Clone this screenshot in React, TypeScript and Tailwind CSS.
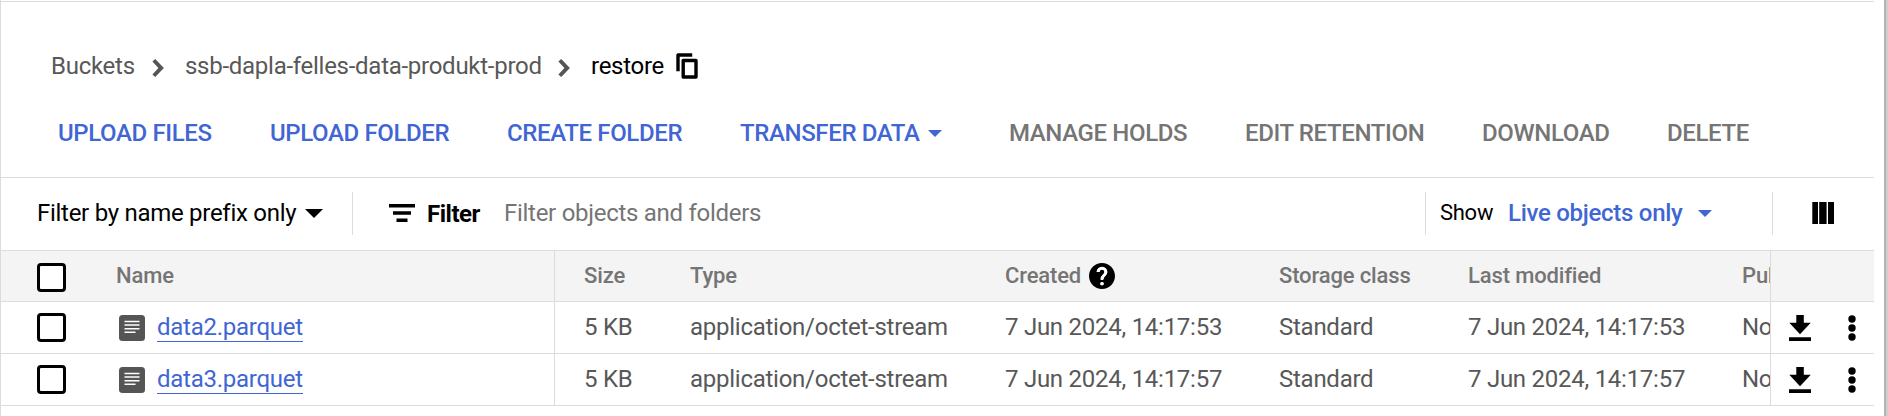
import type { ReactNode } from 'react';

const crumb = 'text-2xl leading-8 whitespace-nowrap';

function Chevron() {
  return (
    <svg width="13" height="18" viewBox="0 0 13 18" fill="#555" className="mt-[3px] shrink-0">
      <path d="M0.400 2.600L3.200 0l8.700 9-8.700 9-2.800-2.600L6.400 9z" />
    </svg>
  );
}

function Caret({ w, h }: { w: number; h: number }) {
  return (
    <svg width={w} height={h} viewBox="0 0 18 9" preserveAspectRatio="none" className="shrink-0" fill="currentColor">
      <path d="M0 0h18l-9 9z" />
    </svg>
  );
}

function Action({ width, off, children }: { width: string; off?: boolean; children: ReactNode }) {
  return (
    <button className={`flex h-[38px] shrink-0 items-center text-left text-2xl leading-8 font-medium tracking-[-0.37px] whitespace-nowrap ${width} ${off ? 'text-[#757575]' : 'text-[#3f66d4]'}`}>
      {children}
    </button>
  );
}

function Box() {
  return <span className="block h-[29px] w-[29px] shrink-0 rounded-[4px] border-3 border-black bg-white" />;
}

function DocIcon() {
  return (
    <svg width="26" height="26" viewBox="0 0 26 26" className="shrink-0">
      <rect width="26" height="26" rx="3.5" fill="#555" />
      <path d="M5.500 6.500h15M5.500 10h15M5.500 13.700h15M5.500 17.300h11" stroke="#fff" strokeWidth="1.5" />
    </svg>
  );
}

function Row({ name, time }: { name: string; time: string }) {
  return (
    <div className="flex h-[52px] w-[1873px] shrink-0 text-2xl leading-[50px] tracking-[-0.26px] text-[#585858]">
      <div className="flex w-[554px] shrink-0 items-start border-r border-b border-[#dcdcdc] pl-9">
        <span className="mt-[11px]"><Box /></span>
        <span className="mt-[13px] ml-[53px] flex"><DocIcon /></span>
        <a className="mt-[10px] ml-3 h-[30px] border-b border-[#3f66d4] leading-[30px] text-[#3f66d4]">{name}</a>
      </div>
      <div className="flex w-[1216px] shrink-0 overflow-hidden border-r border-b border-[#dcdcdc] whitespace-nowrap">
        <span className="w-[135px] shrink-0 pl-[29px]">5 KB</span>
        <span className="w-[315px] shrink-0">application/octet-stream</span>
        <span className="w-[274px] shrink-0">{time}</span>
        <span className="w-[189px] shrink-0">Standard</span>
        <span className="w-[274px] shrink-0">{time}</span>
        <span className="shrink-0">No</span>
      </div>
      <div className="flex flex-1 items-center border-b border-[#dcdcdc] pl-[18px]">
        <svg width="22" height="26" viewBox="0 0 22 26">
          <path d="M7.300 0h7.500v7.700h7L11 19.300 0.300 7.700h7zM0 22.300h22V26H0z" />
        </svg>
        <svg width="8" height="26" viewBox="0 0 8 26" className="ml-[37px]">
          <circle cx="4" cy="4" r="3.700" />
          <circle cx="4" cy="13" r="3.700" />
          <circle cx="4" cy="22" r="3.700" />
        </svg>
      </div>
    </div>
  );
}

export default function App() {
  return (
    <div className="flex h-[416px] w-[1888px] overflow-hidden bg-white font-['Roboto',sans-serif] text-black">
      <main className="flex w-[1874px] shrink-0 flex-col border-l border-[#dcdcdc]">
        <div className="h-[2px] shrink-0 border-b border-[#dcdcdc]" />
        <nav className="flex h-[112px] shrink-0 items-center pt-4 pl-[50px] tracking-[-0.27px] text-[#585858]">
          <span className={`${crumb} w-[101px]`}>Buckets</span>
          <Chevron />
          <span className={`${crumb} ml-[20px] w-[373px]`}>ssb-dapla-felles-data-produkt-prod</span>
          <Chevron />
          <span className={`${crumb} ml-[20px] w-[85px] text-black`}>restore</span>
          <svg width="22" height="26" viewBox="0 0 22 26" fill="none" stroke="#000" strokeWidth="3.400" strokeLinejoin="round">
            <path d="M2 18.300V2H16.200M7.200 7.500h12.800v16.500H7.200z" />
          </svg>
        </nav>
        <div className="flex h-[64px] shrink-0 border-b border-[#dcdcdc] pl-[57px]">
          <Action width="w-[212px]">UPLOAD FILES</Action>
          <Action width="w-[237px]">UPLOAD FOLDER</Action>
          <Action width="w-[233px]">CREATE FOLDER</Action>
          <Action width="w-[269px]"><span className="w-[188px]">TRANSFER DATA</span><Caret w={14} h={7} /></Action>
          <Action off width="w-[236px]">MANAGE HOLDS</Action>
          <Action off width="w-[237px]">EDIT RETENTION</Action>
          <Action off width="w-[185px]">DOWNLOAD</Action>
          <Action off width="w-[90px]">DELETE</Action>
        </div>
        <div className="flex h-[73px] shrink-0 border-b border-[#dcdcdc] pt-[14px] text-2xl tracking-[-0.28px] whitespace-nowrap">
          <div className="flex h-[43px] w-[351px] items-center pb-px pl-9">
            <span className="w-[268px]">Filter by name prefix only</span>
            <Caret w={18} h={9} />
          </div>
          <div className="flex h-[43px] w-[1073px] items-center border-l border-[#dcdcdc] pb-px pl-[36px]">
            <svg width="26" height="18" viewBox="0 0 26 18"><path d="M0 0h26v3.500H0zM4 7.200h18v3.500H4zM7.500 14.400h11v3.500h-11z" /></svg>
            <span className="ml-3 w-[77px] pt-px font-bold tracking-[-0.5px]">Filter</span>
            <span className="text-[#757575]">Filter objects and folders</span>
          </div>
          <div className="flex h-[43px] w-[347px] items-center border-l border-[#dcdcdc] pb-px pl-[14px]">
            <span className="w-[68px] text-[22px] leading-8">Show</span>
            <span className="w-[190px] font-medium text-[#3f66d4]">Live objects only</span>
            <span className="flex text-[#3f66d4]"><Caret w={14} h={7} /></span>
          </div>
          <div className="flex h-[43px] flex-1 items-center border-l border-[#dcdcdc] pb-px pl-[39px]">
            <svg width="22" height="22" viewBox="0 0 22 22"><path d="M0.300 0h5.700v22H0.300zM7.200 0h7.400v22H7.200zM16 0h6v22h-6z" /></svg>
          </div>
        </div>
        <div className="flex h-[51px] shrink-0 border-b border-[#dcdcdc] bg-[#f4f4f4] text-[22px] leading-[49px] font-medium tracking-[-0.14px] whitespace-nowrap text-[#757575]">
          <div className="flex w-[554px] shrink-0 border-r border-[#dcdcdc] pl-9">
            <span className="mt-3"><Box /></span>
            <span className="ml-[50px]">Name</span>
          </div>
          <div className="flex w-[1216px] shrink-0 overflow-hidden border-r border-[#dcdcdc]">
            <span className="w-[135px] shrink-0 pl-[29px]">Size</span>
            <span className="w-[315px] shrink-0">Type</span>
            <span className="flex h-[49px] w-[274px] shrink-0 items-center">
              <span className="w-[84px]">Created</span>
              <svg width="26" height="26" viewBox="2 2 20 20"><path d="M12 2C6.480 2 2 6.480 2 12s4.480 10 10 10 10-4.480 10-10S17.520 2 12 2zm1 17h-2v-2h2v2zm2.070-7.750l-.9.920C13.450 12.900 13 13.500 13 15h-2v-.5c0-1.100.450-2.100 1.170-2.830l1.240-1.260c.370-.360.590-.860.590-1.410 0-1.100-.9-2-2-2s-2 .9-2 2H8c0-2.210 1.790-4 4-4s4 1.790 4 4c0 .880-.360 1.680-.930 2.250z" /><path d="M9 9a3 3 0 0 1 6 0c0 2.300-3 2.700-3 5.500" fill="none" stroke="#fff" strokeWidth="2.300" /><circle cx="12" cy="18" r="1.400" fill="#fff" /></svg>
            </span>
            <span className="w-[189px] shrink-0">Storage class</span>
            <span className="w-[274px] shrink-0">Last modified</span>
            <span className="shrink-0">Public access</span>
          </div>
        </div>
        <Row name="data2.parquet" time="7 Jun 2024, 14:17:53" />
        <Row name="data3.parquet" time="7 Jun 2024, 14:17:57" />
      </main>
      <div className="ml-auto h-full w-1 border-l-2 border-[#b4b4b4] bg-[#cfcfcf]" />
    </div>
  );
}
